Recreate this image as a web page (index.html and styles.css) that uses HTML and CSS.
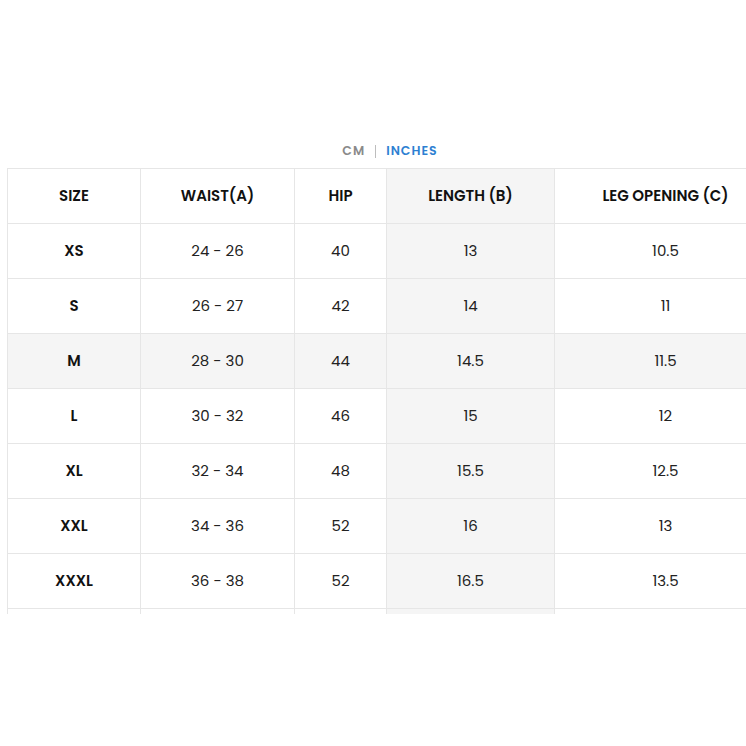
FILE: index.html
```html
<!DOCTYPE html>
<html>
<head>
<meta charset="utf-8">
<link rel="stylesheet" href="styles.css">
</head>
<body>
<div class="page">
  <div class="units">
    <span class="unit">CM</span>
    <span class="sep"></span>
    <span class="unit active">INCHES</span>
  </div>
  <div class="clip">
    <table class="chart">
      <colgroup>
        <col class="c1"><col class="c2"><col class="c3"><col class="c4"><col class="c5">
      </colgroup>
      <tr class="head"><th>SIZE</th><th>WAIST(A)</th><th>HIP</th><th class="hl">LENGTH (B)</th><th>LEG OPENING (C)</th></tr>
      <tr><th>XS</th><td>24 - 26</td><td>40</td><td class="hl">13</td><td>10.5</td></tr>
      <tr><th>S</th><td>26 - 27</td><td>42</td><td class="hl">14</td><td>11</td></tr>
      <tr class="hlrow"><th>M</th><td>28 - 30</td><td>44</td><td class="hl">14.5</td><td>11.5</td></tr>
      <tr><th>L</th><td>30 - 32</td><td>46</td><td class="hl">15</td><td>12</td></tr>
      <tr><th>XL</th><td>32 - 34</td><td>48</td><td class="hl">15.5</td><td>12.5</td></tr>
      <tr><th>XXL</th><td>34 - 36</td><td>52</td><td class="hl">16</td><td>13</td></tr>
      <tr><th>XXXL</th><td>36 - 38</td><td>52</td><td class="hl">16.5</td><td>13.5</td></tr>
      <tr><th></th><td></td><td></td><td class="hl"></td><td></td></tr>
    </table>
  </div>
</div>
</body>
</html>
```
FILE: styles.css
```css
html, body {
  margin: 0;
  padding: 0;
  background: #fff;
}
body {
  width: 746px;
  height: 746px;
  overflow: hidden;
  font-family: "Poppins", "Inter", "Noto Sans", sans-serif;
  color: #1a1a1a;
}
.page {
  padding-top: 142px;
}
.units {
  display: flex;
  justify-content: center;
  align-items: center;
  gap: 10px;
  height: 18px;
  margin-bottom: 8px;
  padding-left: 34px;
  font-size: 12.5px;
  font-weight: 600;
  letter-spacing: 1px;
}
.unit { color: #8a8a8a; }
.unit.active { color: #2d7fd2; }
.sep {
  width: 1px;
  height: 13px;
  background: #bdbdbd;
}
.clip {
  margin-left: 7px;
  width: 739px;
  height: 446px;
  overflow: hidden;
}
.chart {
  border-collapse: collapse;
  table-layout: fixed;
  width: 769px;
}
.c1 { width: 133px; }
.c2 { width: 154px; }
.c3 { width: 92px; }
.c4 { width: 168px; }
.c5 { width: 222px; }
.chart tr { height: 55px; }
.chart th, .chart td {
  border: 1px solid #e6e6e6;
  text-align: center;
  vertical-align: middle;
  padding: 0 0 2px;
  height: 52px;
}
.chart th {
  font-size: 15px;
  font-weight: 600;
  color: #111;
}
.chart td {
  font-size: 15px;
  font-weight: 400;
  color: #222;
}
.chart .hl { background: #f5f5f5; }
.chart .hlrow th, .chart .hlrow td { background: #f5f5f5; }
```
